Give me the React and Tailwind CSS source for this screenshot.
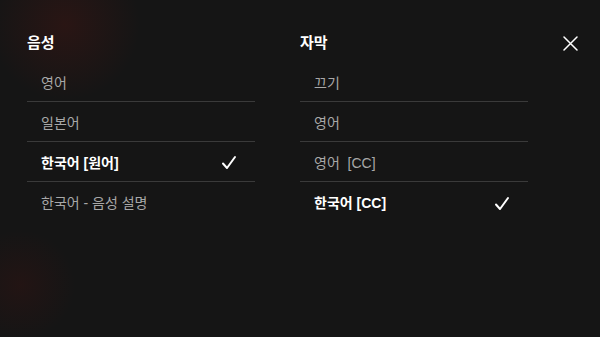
const audio = [
  { label: '영어' },
  { label: '일본어' },
  { label: '한국어 [원어]', selected: true },
  { label: '한국어 - 음성 설명' },
];

const subtitles = [
  { label: '끄기' },
  { label: '영어' },
  { label: '영어\u00a0\u00a0[CC]' },
  { label: '한국어 [CC]', selected: true },
];

function Check() {
  return (
    <svg width="16" height="16" viewBox="0 0 16 16" fill="none" stroke="#fff" strokeWidth="2" strokeLinecap="round" strokeLinejoin="round">
      <path d="M2 8.5l4 4.5L14 2" />
    </svg>
  );
}

function Column({ title, items }) {
  return (
    <div className="w-[228px]">
      <h2 className="h-5 leading-5 text-[15px] font-bold text-white mb-[9px]">{title}</h2>
      <ul>
        {items.map((item, i) => (
          <li
            key={item.label}
            className={`h-10 flex items-center justify-between pt-[3px] pl-[14px] pr-[18px] ${i < items.length - 1 ? 'border-b border-[#3a3a3a]' : ''}`}
          >
            <span className={item.selected ? 'text-[14px] font-bold text-white' : 'text-[14px] text-[#a8a8a8]'}>
              {item.label}
            </span>
            {item.selected && <Check />}
          </li>
        ))}
      </ul>
    </div>
  );
}

export default function App() {
  return (
    <div
      className="w-[600px] h-[337px] overflow-hidden flex pt-[33px] pl-[27px] bg-[#151515] bg-[radial-gradient(circle_at_65px_25px,rgba(80,22,18,0.35),transparent_75px),radial-gradient(circle_at_20px_285px,rgba(70,18,16,0.28),transparent_55px)]"
      style={{ fontFamily: '"Liberation Sans", "Noto Sans CJK KR", sans-serif' }}
    >
      <Column title="음성" items={audio} />
      <div className="ml-[45px]">
        <Column title="자막" items={subtitles} />
      </div>
      <div className="ml-auto pr-[20px]">
        <button className="h-5 w-5 flex items-center justify-center">
          <svg width="15" height="15" viewBox="0 0 15 15" fill="none" stroke="#fff" strokeWidth="1.5" strokeLinecap="round">
            <path d="M1 1l13 13M14 1L1 14" />
          </svg>
        </button>
      </div>
    </div>
  );
}
